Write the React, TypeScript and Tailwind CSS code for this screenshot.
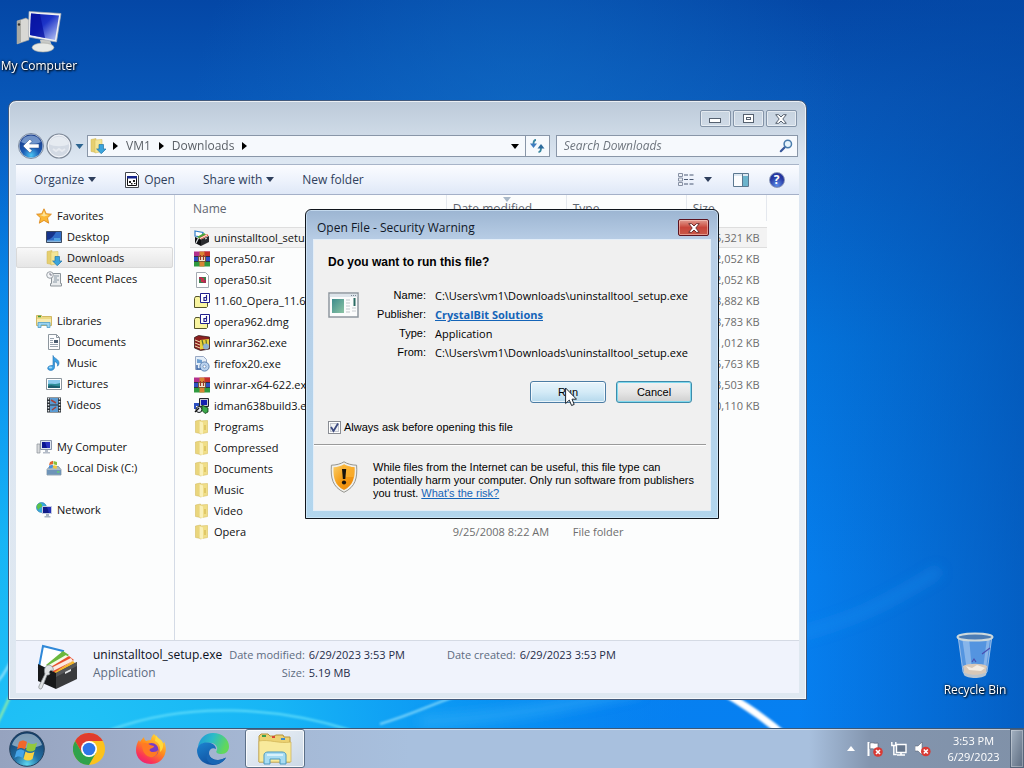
import clsx from 'clsx';
import { ReactNode } from 'react';

interface IconProps {
  className?: string;
}

interface NavItem {
  label: string;
  icon: ReactNode;
  active?: boolean;
}

interface FileItem {
  name: string;
  icon: ReactNode;
  date?: string;
  type?: string;
  size?: string;
}

/* Wallpaper */
const Wallpaper = () => (
  <svg
    className="absolute inset-0 h-full w-full"
    viewBox="0 0 1024 768"
    preserveAspectRatio="none"
    aria-hidden="true"
  >
    <defs>
      <linearGradient id="sky" x1="0" y1="0" x2="0" y2="1">
        <stop offset="0" stopColor="#0447a6" />
        <stop offset="0.13" stopColor="#0857b8" />
        <stop offset="0.45" stopColor="#0474dc" />
        <stop offset="0.75" stopColor="#067fee" />
        <stop offset="1" stopColor="#0680f2" />
      </linearGradient>
      <radialGradient id="glow" gradientUnits="userSpaceOnUse" cx="60" cy="760" r="640">
        <stop offset="0" stopColor="#22c4f6" />
        <stop offset="0.35" stopColor="#18b8f6" stopOpacity="0.95" />
        <stop offset="0.75" stopColor="#0a96f4" stopOpacity="0.6" />
        <stop offset="1" stopColor="#0680f2" stopOpacity="0" />
      </radialGradient>
      <radialGradient id="light" gradientUnits="userSpaceOnUse" cx="520" cy="130" r="330">
        <stop offset="0" stopColor="#1270c8" stopOpacity="0.6" />
        <stop offset="1" stopColor="#1270c8" stopOpacity="0" />
      </radialGradient>
      <linearGradient id="edge" x1="0" y1="0" x2="1" y2="0">
        <stop offset="0.78" stopColor="#0349a6" stopOpacity="0" />
        <stop offset="1" stopColor="#0349a6" stopOpacity="0.6" />
      </linearGradient>
      <filter id="soft">
        <feGaussianBlur stdDeviation="1" />
      </filter>
      <filter id="haze">
        <feGaussianBlur stdDeviation="6" />
      </filter>
    </defs>
    <rect width="1024" height="768" fill="url(#sky)" />
    <rect width="1024" height="768" fill="url(#light)" />
    <rect width="1024" height="768" fill="url(#glow)" />
    <rect width="1024" height="768" fill="url(#edge)" />
    <g fill="none" filter="url(#soft)">
      <path d="M-4 726C6 706 14 688 30 650" stroke="#9af0a0" strokeWidth="2" />
      <path d="M-4 684C6 672 10 664 20 640" stroke="#9fe6fb" strokeWidth="2" />
      <path d="M110 730C190 700 280 708 350 730" stroke="#5fdcfa" strokeWidth="2" />
      <path d="M380 724C420 712 440 700 470 692" stroke="#7fd6fb" strokeWidth="2" />
      <path d="M700 680C735 698 760 714 790 740" stroke="#fff" strokeWidth="7" />
    </g>
    <g fill="none" filter="url(#haze)">
      <path d="M420 722C520 716 560 706 640 690" stroke="#3cb4fa" strokeWidth="10" opacity="0.5" />
      <path d="M800 634C850 620 880 608 940 570" stroke="#2a94f4" strokeWidth="10" opacity="0.35" />
    </g>
  </svg>
);

/* Icons */
const ComputerIcon = ({ className }: IconProps) => (
  <svg className={className} viewBox="0 0 48 44" aria-hidden="true">
    <defs>
      <linearGradient id="screen" x1="0" y1="0" x2="1" y2="1">
        <stop offset="0" stopColor="#0a1aa8" />
        <stop offset="0.45" stopColor="#1c34c8" />
        <stop offset="1" stopColor="#c4d0f8" />
      </linearGradient>
    </defs>
    <path d="M2 11l9-3 3 2v20l-12 4z" fill="#d8d8d4" stroke="#9a9c98" strokeWidth="0.6" />
    <path d="M2 11l4-1v22l-4 2z" fill="#a9aaa4" />
    <circle cx="4" cy="14.500" r="1.200" fill="#333" />
    <path d="M25 30h10l2 6-10 2z" fill="#c8cac6" />
    <ellipse cx="28" cy="37.500" rx="11" ry="4.500" fill="#e8eae6" stroke="#a4a6a0" strokeWidth="0.6" />
    <path d="M14 1.500l32 2-4.500 28.500-28-5z" fill="#f0f2f4" stroke="#a8acb4" strokeWidth="0.7" />
    <path d="M16 3.500l28 2-4 24.500-25-5z" fill="url(#screen)" />
    <path d="M16 3.500l9 .8 5 23.700-15-3z" fill="#0512a0" opacity="0.75" />
  </svg>
);

const RecycleBinIcon = ({ className }: IconProps) => (
  <svg className={className} viewBox="0 0 38 46" aria-hidden="true">
    <path d="M2 4l5 36c1 5 22 5 24 0l5-36z" fill="#6fa4e6" fillOpacity="0.75" stroke="#b4cdee" strokeWidth="0.8" />
    <path d="M6 5l5 34h5L13 5z" fill="#e8f2fc" opacity="0.35" />
    <path d="M31 6l-4 31h3l4-30z" fill="#e8f2fc" opacity="0.35" />
    <path d="M7 34c5-3 19-3 24 0l-1 7c-4 4-18 4-22 0z" fill="#d8c8b8" />
    <path d="M10 34l6 2 5-3 8 3-4 3-12-1z" fill="#f4ece2" />
    <path d="M7 39c3 5 21 5 24 0l-1 4c-3 4-19 4-22 0z" fill="#b8c4d0" />
    <path d="M16 30l2-3 2 3M26 22l8-6" stroke="#4a50b0" strokeWidth="1.200" fill="none" />
    <ellipse cx="19" cy="5" rx="17.500" ry="3.600" fill="#4c7cb4" stroke="#ccd8dc" strokeWidth="2" />
  </svg>
);

const MonitorIcon = () => (
  <svg className="size-4 shrink-0" viewBox="0 0 16 16" aria-hidden="true">
    <path d="M1 5h3v9H1z" fill="#d8dadc" stroke="#8a9098" strokeWidth="0.7" />
    <path d="M4.500 1.500h11v9h-11z" fill="#dde4ee" stroke="#8a94a8" />
    <path d="M6 3h8v6H6z" fill="#2a32c0" />
    <path d="M6 3h3l2 6H6z" fill="#0a1490" />
    <path d="M9 11h3v2h2v1.500H7V13h2z" fill="#b4bcc8" />
  </svg>
);

const StarIcon = () => (
  <svg className="size-4 shrink-0" viewBox="0 0 16 16" aria-hidden="true">
    <path
      d="M8 .8l2.200 4.900 5.200.5-3.900 3.600 1.200 5.400L8 12.400l-4.700 2.800 1.200-5.400L.6 6.200l5.200-.5z"
      fill="#fbb836"
      stroke="#d98316"
      strokeWidth="0.8"
    />
    <path d="M8 3l1.300 3.600 3.500.5L8 8.500 4 7l2.600-.4z" fill="#fee39a" />
  </svg>
);

const DesktopIcon = () => (
  <svg className="size-4 shrink-0" viewBox="0 0 16 16" aria-hidden="true">
    <path d="M.5 2.500h15v11H.5z" fill="#2f6cc8" stroke="#3d4a60" />
    <path d="M1 3h9C8 7 5 10 1 11z" fill="#16348c" />
    <path d="M1 11.500h14V13H1z" fill="#8ab4dc" />
    <path d="M8 9h6v3H8z" fill="#4fa0e0" />
  </svg>
);

const FolderIcon = () => (
  <svg className="size-4 shrink-0" viewBox="0 0 16 16" aria-hidden="true">
    <path d="M1.500 2l5-1v13.500l-5-1z" fill="#ead67c" stroke="#cfb455" strokeWidth="0.5" />
    <path d="M6 2l7.500-.5v12L6 15z" fill="#f0de88" stroke="#d8c163" strokeWidth="0.6" />
    <path d="M5.500 2l3.500 1.500v11.500l-3.500-.5z" fill="#f9f0b8" />
    <path d="M10 6h2v5h-2z" fill="#d9bf58" opacity="0.7" />
  </svg>
);

const DownloadsIcon = () => (
  <svg className="size-4 shrink-0" viewBox="0 0 16 16" aria-hidden="true">
    <path d="M1 1.500l5-1v14l-5-1z" fill="#e6cf70" stroke="#cfb455" strokeWidth="0.5" />
    <path d="M5 2l7-.5v12L5 15z" fill="#f4e596" stroke="#d8c163" strokeWidth="0.6" />
    <path d="M9 6.500h4.500V11H16l-4.700 4.700L6.600 11H9z" fill="#3aa4dc" stroke="#2376a8" strokeWidth="0.7" />
  </svg>
);

const RecentIcon = () => (
  <svg className="size-4 shrink-0" viewBox="0 0 16 16" aria-hidden="true">
    <path d="M5.500 2.500h9v10h1v2.500h-11v-2.500h1z" fill="#e9ecee" stroke="#8c949a" />
    <path d="M8 5h5M8 7h3M8 9h5M7 11h4" stroke="#8a98a4" />
    <circle cx="4" cy="4" r="3.300" fill="#f4f6f8" stroke="#9aa0a6" />
    <path d="M4 2v2h2" stroke="#667" fill="none" strokeWidth="0.8" />
  </svg>
);

const LibrariesIcon = () => (
  <svg className="size-4 shrink-0" viewBox="0 0 16 16" aria-hidden="true">
    <path d="M.5 2.500h5l1 1h9v9H.5z" fill="#ecd983" stroke="#c8ac4c" strokeWidth="0.8" />
    <path d="M2 3.500h3" stroke="#3d9a3a" strokeWidth="1.500" />
    <path d="M1 6h14v6H1z" fill="#f6eab0" />
    <path d="M2 14.500V9.500h12v5h-3v-2.500H5v2.500z" fill="#9cd4f0" stroke="#4d9cc8" strokeWidth="0.8" />
  </svg>
);

const DocumentIcon = () => (
  <svg className="size-4 shrink-0" viewBox="0 0 16 16" aria-hidden="true">
    <path d="M2.500.5h8l3 3v12h-11z" fill="#fcfdfe" stroke="#8d969e" />
    <path d="M10.500.5v3h3" fill="none" stroke="#8d969e" />
    <path d="M4 4.500h4M4 6.500h3M4 8.500h3M4 10.500h8M4 12.500h8" stroke="#98a4b0" />
    <path d="M8 6h4v3H8z" fill="#4a5c70" />
  </svg>
);

const MusicIcon = () => (
  <svg className="size-4 shrink-0" viewBox="0 0 16 16" aria-hidden="true">
    <path
      d="M7 .5c1 3 6 3.500 6 7.500 0 1.500-.7 2.500-1.500 3.200.5-2.500-.7-4-3-4.700v5.700c0 1.800-1.600 3.200-3.700 3.200-1.900 0-3.100-.9-3.100-2.200 0-1.700 2-3 5.300-2.700z"
      fill="#3b9fe2"
      stroke="#1d6fb4"
      strokeWidth="0.6"
    />
    <ellipse cx="4.500" cy="12.500" rx="1.800" ry="1" fill="#9fd8f8" />
  </svg>
);

const PicturesIcon = () => (
  <svg className="size-4 shrink-0" viewBox="0 0 16 16" aria-hidden="true">
    <path d="M.5 2.500h15v11H.5z" fill="#fff" stroke="#8a949c" />
    <path d="M2 4h12v8H2z" fill="#8ccbee" />
    <path d="M2 8c3-1 6 1 12-1v5H2z" fill="#2f8f9a" />
    <path d="M2 10c4-2 8 1 12 0v2H2z" fill="#1c5f70" />
  </svg>
);

const VideosIcon = () => (
  <svg className="size-4 shrink-0" viewBox="0 0 16 16" aria-hidden="true">
    <path d="M1 .5h14v15H1z" fill="#2b3036" />
    <path d="M4 1h8v6.500H4zM4 8.500h8V15H4z" fill="#5a9cd4" />
    <path d="M5 3l5 3M10 10l-4 3" stroke="#a2453f" strokeWidth="1.500" />
    <path d="M2.500 1v14M13.500 1v14" stroke="#dfe4e8" strokeWidth="1.500" strokeDasharray="1.500 1.500" />
  </svg>
);

const DiskIcon = () => (
  <svg className="size-4 shrink-0" viewBox="0 0 16 16" aria-hidden="true">
    <path d="M1 9.500l2.500-3h9l2.500 3v5.500H1z" fill="#a9bac8" stroke="#6f8496" strokeWidth="0.7" />
    <path d="M1 10h14v4.500H1z" fill="#6e94b8" />
    <path d="M11 12h2.500" stroke="#5fe060" strokeWidth="1.200" />
    <path d="M4 2l3-1.300v3.500L3 5z" fill="#e2632c" />
    <path d="M7.500 1L11 2v3.200L7.500 4.300z" fill="#8ac03c" />
    <path d="M3 5.600L7 4.800 6.500 8 3 8.500z" fill="#4a90d8" />
    <path d="M7.500 5l3.500.9-.5 3L7 8z" fill="#f4c83a" />
  </svg>
);

const NetworkIcon = () => (
  <svg className="size-4 shrink-0" viewBox="0 0 16 16" aria-hidden="true">
    <circle cx="5.500" cy="5.500" r="5" fill="#37a9dc" stroke="#2478a8" strokeWidth="0.6" />
    <path d="M2 2c3-2 4 0 4 2S3 5 3 8C1 7 0 4 2 2z" fill="#5cc248" />
    <path d="M6.500 4.500h9v7h-9z" fill="#2430b8" stroke="#c3cbe0" />
    <path d="M7 5h4l2 6H7z" fill="#101c88" />
    <path d="M10 12h3v2h1.500v1.500h-6V14H10z" fill="#a8b4c4" />
  </svg>
);

const ToolboxIcon = ({ className }: IconProps) => (
  <svg className={className} viewBox="0 0 44 46" aria-hidden="true">
    <path d="M7 2l20 5-6 20-18-4z" fill="#fff" stroke="#2f88d8" strokeWidth="2" />
    <path d="M10 21l17-14 6 4-18 14z" fill="#6cb83c" />
    <path d="M11 22l19-11 3 3-19 12z" fill="#f4fbe8" />
    <path d="M13 24l20-12 5 4-20 13z" fill="#e8502f" />
    <path d="M15 24l20-10 2 3-20 10z" fill="#fdeae2" />
    <path d="M17 29l20-12 3 3-20 13z" fill="#f4b62c" />
    <path d="M2 20l18 9v16L2 37z" fill="#17181a" />
    <path d="M20 29l21-11v17L20 45z" fill="#3a3b3d" />
    <path d="M20 29l21-11v4L20 33z" fill="#57585a" />
    <path d="M29 28l6-3v2l-6 3z" fill="#e4e6e8" />
    <path
      d="M12 21c4 0 6 3 5 6l-2-1-2 2 1 2c-1 1-2 1-3 1L6 44c-1 2-4 1-3-2l6-12c-1-3-1-7 3-9z"
      fill="#dfe2e4"
      stroke="#8b9094"
      strokeWidth="0.8"
    />
  </svg>
);

const SetupIcon = () => (
  <svg className="size-4 shrink-0" viewBox="0 0 16 16" aria-hidden="true">
    <path d="M1 1l8 1.500L8 7 1 6z" fill="#fff" stroke="#2f7cc8" strokeWidth="1.200" />
    <path d="M3 7l7-4 2 1.500L6 9z" fill="#4aa83c" />
    <path d="M5 8l8-4 1.500 1.500L7 9.500z" fill="#e8502f" />
    <path d="M6 8.500l7-3.500" stroke="#fff" />
    <path d="M1 7l6 2.500V16l-6-3z" fill="#0e0f12" />
    <path d="M7 9.500L15 6v6l-8 4z" fill="#2a2b2e" />
    <path d="M11 9l2-1" stroke="#e4e6e8" />
    <path d="M4.500 8L2 13" stroke="#d8dcde" strokeWidth="1.200" />
  </svg>
);

const RarIcon = () => (
  <svg className="size-4 shrink-0" viewBox="0 0 16 16" aria-hidden="true">
    <path d="M0 .5h16v5H0z" fill="#b4308c" />
    <path d="M10 .5h6v5h-6z" fill="#c42f2a" />
    <path d="M0 5.500h16v5H0z" fill="#2f50c4" />
    <path d="M0 10.500h16v5H0z" fill="#2f9a3f" />
    <path d="M0 5.500h16M0 10.500h16" stroke="#17202c" strokeWidth="0.8" />
    <path d="M5.500.5h5v15h-5z" fill="#d88434" />
    <path d="M4.500 5.500h7v5h-7z" fill="#f2e8d0" stroke="#6c4420" strokeWidth="0.8" />
    <path d="M6.500 4v5M9.500 4v5" stroke="#a03424" strokeWidth="1.200" />
  </svg>
);

const SitIcon = () => (
  <svg className="size-4 shrink-0" viewBox="0 0 16 16" aria-hidden="true">
    <path d="M2.500.5h9l3 3v12h-12z" fill="#fff" stroke="#a4abb2" />
    <path d="M5 5h7v6H5z" fill="#3e7d4c" />
    <path d="M5 5h3v2H5zM9 8h3v3H9z" fill="#a52f52" />
    <path d="M7 6h3v4H7z" fill="#c8304a" />
  </svg>
);

const DmgIcon = () => (
  <svg className="size-4 shrink-0" viewBox="0 0 16 16" aria-hidden="true">
    <path d="M.5 5.500l1-2h4l1 1.500h7v8.500l-1 1H.5z" fill="#f8f4a0" stroke="#55552a" />
    <path d="M6.500.5h9v9h-9z" fill="#fff" stroke="#20208c" />
    <path d="M12.500 2v5.500M12.500 4.500h-2.500v3h2.500" stroke="#20208c" strokeWidth="1.200" fill="none" />
  </svg>
);

const WinrarIcon = () => (
  <svg className="size-4 shrink-0" viewBox="0 0 16 16" aria-hidden="true">
    <path d="M.5 2.500l4-2 11 1.500v12l-9 1.500-6-2.500z" fill="#8c2020" stroke="#241010" strokeWidth="0.7" />
    <path d="M1 5l5 2M1 8l5 2M1 11l5 2" stroke="#f0e0b0" />
    <path d="M6 5l9-1v9l-9 1.500z" fill="#e8cf3c" />
    <path d="M8 5l2 8M12 5l1 8" stroke="#5a6e2c" strokeWidth="1.200" />
    <circle cx="12" cy="11.500" r="3" fill="#8fb0d0" />
  </svg>
);

const InstallerIcon = () => (
  <svg className="size-4 shrink-0" viewBox="0 0 16 16" aria-hidden="true">
    <path d="M1.500.5h8l3 3v10h-11z" fill="#e4eef8" stroke="#98a8c4" />
    <path d="M3 3l5 1v3H3z" fill="#6f9fd0" />
    <circle cx="10.500" cy="10.500" r="4.600" fill="#b9d2ee" stroke="#5c80b0" />
    <circle cx="10.500" cy="10.500" r="1.500" fill="#fff" stroke="#5c80b0" strokeWidth="0.7" />
    <path d="M3 9v4h4" stroke="#3e68a8" strokeWidth="1.500" fill="none" />
  </svg>
);

const IdmanIcon = () => (
  <svg className="size-4 shrink-0" viewBox="0 0 16 16" aria-hidden="true">
    <path d="M5.500.5h9v8h-9z" fill="#c8ccd4" stroke="#23262c" />
    <path d="M7 2h6v5H7z" fill="#1420b0" />
    <path d="M0 5h5v3H2v3H0z" fill="#2c50c0" />
    <circle cx="5" cy="11.500" r="3" fill="#e8ecf0" stroke="#14181c" />
    <path d="M8 7l6 3v4l-3 1.500-3-3z" fill="#3ba84a" stroke="#123c1a" strokeWidth="0.8" />
    <path d="M1 14l4-4" stroke="#111" strokeWidth="1.500" />
  </svg>
);

const ShieldIcon = () => (
  <svg className="h-8 w-7 shrink-0" viewBox="0 0 28 32" aria-hidden="true">
    <defs>
      <linearGradient id="shield" x1="0" y1="0" x2="1" y2="1">
        <stop offset="0" stopColor="#fbd06a" />
        <stop offset="0.5" stopColor="#f59c14" />
        <stop offset="1" stopColor="#e8860c" />
      </linearGradient>
    </defs>
    <path
      d="M14 .8c3 2 8 3.400 12.600 3.400C27.500 17 25.500 26 14 31.300 2.500 26 .5 17 1.400 4.200 6 4.200 11 2.800 14 .8z"
      fill="#f0f0ec"
      stroke="#8a8a84"
      strokeWidth="0.9"
    />
    <path
      d="M14 3.200c3 1.800 6.500 2.800 10.500 3C25 17 23 24.500 14 29 5 24.500 3 17 3.500 6.200c4-.2 7.500-1.200 10.500-3z"
      fill="url(#shield)"
    />
    <path d="M14 3.200c3 1.800 6.500 2.800 10.500 3l-.1 9.800H14z" fill="#fdb93c" opacity="0.6" />
    <path d="M12 8h4.200l-.9 10h-2.400z" fill="#17130c" />
    <circle cx="14" cy="21.500" r="2.100" fill="#17130c" />
  </svg>
);

const ProgramIcon = () => (
  <svg className="h-[26px] w-8 shrink-0" viewBox="0 0 32 26" aria-hidden="true">
    <defs>
      <linearGradient id="program" x1="0" y1="0" x2="1" y2="1">
        <stop offset="0" stopColor="#3c8c8c" />
        <stop offset="1" stopColor="#8cc4a4" />
      </linearGradient>
    </defs>
    <path d="M1 1h29v24H1z" fill="#fbfcfc" stroke="#8e979e" strokeWidth="1.500" />
    <path d="M1.800 2h27.500v3H1.800z" fill="#dde4ea" />
    <path d="M23 3.500h5" stroke="#7a8894" strokeDasharray="1 1" />
    <path d="M4 7h12v14H4z" fill="url(#program)" />
    <path d="M18 8h4M18 11h4M18 14h4M18 17h4M18 20h4" stroke="#c0c6ca" />
    <path d="M26.500 6v8" stroke="#2c6c64" strokeWidth="2" />
    <path d="M24 16h4M24 19h4" stroke="#c8ccd0" />
  </svg>
);

const BackButton = () => (
  <svg className="size-7" viewBox="0 0 28 28" aria-hidden="true">
    <defs>
      <radialGradient id="back" cx="0.5" cy="0.9" r="0.8">
        <stop offset="0" stopColor="#4cc4f4" />
        <stop offset="0.45" stopColor="#1c5cb4" />
        <stop offset="1" stopColor="#1c3f8c" />
      </radialGradient>
    </defs>
    <circle cx="14" cy="14" r="12.500" fill="#d4dfec" stroke="#7c8ba0" />
    <circle cx="14" cy="14" r="11.500" fill="url(#back)" />
    <path d="M4 10a11 11 0 0 1 20 0c-6 3-14 3-20 0z" fill="#a8c8ec" opacity="0.6" />
    <path d="M6 14l7-7 2 2.500-2.500 2.500H22v4h-9.500l2.500 2.500L13 21z" fill="#fff" stroke="#2c4c84" strokeWidth="0.5" />
  </svg>
);

const ForwardButton = () => (
  <svg className="size-7" viewBox="0 0 28 28" aria-hidden="true">
    <circle cx="14" cy="14" r="12" fill="#d3dae4" stroke="#7c8796" strokeWidth="1.200" />
    <circle cx="14" cy="14" r="10.800" fill="none" stroke="#f4f6fa" />
    <path d="M4 12a10.500 10.500 0 0 1 20 0c-5 3-15 3-20 0z" fill="#e6ebf1" />
    <path d="M8 17l3 2 3-2 3 2 3-2" fill="none" stroke="#e6eaf0" strokeWidth="2" />
  </svg>
);

const Triangle = ({ className }: IconProps) => (
  <svg className={clsx('h-[5px]', className ?? 'w-2')} viewBox="0 0 8 5" aria-hidden="true">
    <path d="M0 0h8L4 5z" fill="currentColor" />
  </svg>
);

const RightTriangle = () => (
  <svg className="h-2 w-[5px]" viewBox="0 0 5 8" aria-hidden="true">
    <path d="M0 0v8l5-4z" fill="#000" />
  </svg>
);

const RefreshIcon = () => (
  <svg className="size-4" viewBox="0 0 16 16" aria-hidden="true">
    <path d="M7 2C4.800 2 4.500 4 4.500 6" stroke="#3886a0" strokeWidth="1.800" fill="none" />
    <path d="M1 5.500h7L4.500 10z" fill="#3f7cc0" />
    <path d="M9.500 14c2.200 0 2.500-2 2.500-4" stroke="#3886a0" strokeWidth="1.800" fill="none" />
    <path d="M8.500 10.500h7L12 6z" fill="#2c6a9c" />
  </svg>
);

const SearchIcon = () => (
  <svg className="size-3.5" viewBox="0 0 14 14" aria-hidden="true">
    <path d="M6 8L1.800 12.200" stroke="#38579a" strokeWidth="2.200" strokeLinecap="round" />
    <circle cx="8.800" cy="5" r="3.700" fill="#e6f4fc" stroke="#4a7cac" strokeWidth="1.500" />
  </svg>
);

const OpenIcon = () => (
  <svg className="size-4" viewBox="0 0 16 16" aria-hidden="true">
    <path d="M1.500.5h10l3 3v12h-13z" fill="#fdfdfd" stroke="#44484e" />
    <path d="M3.500 4.500h9v9h-9z" fill="#fff" stroke="#111" />
    <path d="M3 4h10v2.500H3z" fill="#14248c" />
    <path d="M5 9h2v2H5zM9 8h2v2H9zM7 11h1.500v1.500H7zM10 11h1.500v1H10z" fill="#222" />
  </svg>
);

const ViewIcon = () => (
  <svg className="h-3.5 w-4" viewBox="0 0 16 14" aria-hidden="true">
    <path d="M.5.500h4v3h-4zM.5 5h4v3h-4zM.5 9.500h4v3h-4z" fill="#eef2f8" stroke="#8791a4" />
    <path d="M6 2h4M11.500 2h4M6 6.500h4M11.500 6.500h4M6 11h4M11.500 11h4" stroke="#4a5872" />
  </svg>
);

const PreviewIcon = () => (
  <svg className="h-3.5 w-4" viewBox="0 0 16 14" aria-hidden="true">
    <path d="M.5.500h15v13H.5z" fill="#fcfdfe" stroke="#5c7890" />
    <path d="M1 1h14v2H1z" fill="#dfe9f2" />
    <path d="M10 3h5v10h-5z" fill="#6cb4cc" />
    <path d="M9.500 1v12.500" stroke="#5c7890" />
  </svg>
);

const HelpIcon = () => (
  <span className="flex size-4 items-center justify-center rounded-full border border-[#8794b8] bg-[radial-gradient(circle_at_50%_85%,#5c8ce8,#2536a0_60%)] text-xs font-bold text-white">
    ?
  </span>
);

const CloseGlyph = ({ className }: IconProps) => (
  <svg className={clsx('h-2.5 w-3', className)} viewBox="0 0 12 10" aria-hidden="true">
    <path
      d="M.7.700h3L6 3 8.300.7h3L7.800 5l3.500 4.300h-3L6 7 3.700 9.300h-3L4.200 5z"
      fill="#fff"
      stroke="currentColor"
      strokeWidth="1"
    />
  </svg>
);

const CursorIcon = () => (
  <svg className="pointer-events-none absolute top-[177px] left-[259px] h-5 w-3" viewBox="0 0 12 20" aria-hidden="true">
    <path d="M.6 1v15.500l3.700-3.400L6.600 18.500l2.600-1.100L7 12.200h4.500z" fill="#fff" stroke="#1c2630" strokeWidth="1" />
  </svg>
);

/* Taskbar icons */
const StartOrb = () => (
  <svg className="size-9" viewBox="0 0 36 36" aria-hidden="true">
    <defs>
      <radialGradient id="orb" cx="0.5" cy="0.95" r="0.9">
        <stop offset="0" stopColor="#5cd8f0" />
        <stop offset="0.4" stopColor="#2470a4" />
        <stop offset="1" stopColor="#123c68" />
      </radialGradient>
    </defs>
    <circle cx="18" cy="18" r="17.300" fill="url(#orb)" stroke="#24405c" />
    <path d="M3 14a15.500 15.500 0 0 1 30 0c-8 4-22 4-30 0z" fill="#c4d8e4" opacity="0.6" />
    <path d="M10 11c3-2 5-2 8 0l-2 7.500c-3-2-5-2-8 0z" fill="#f2682a" />
    <path d="M19 11.500c3 2 6 2 9 0l-2 7.500c-3 2-6 2-9 0z" fill="#92c83e" />
    <path d="M7.500 20c3-2 5-2 8 0L13.500 27c-3-2-5-2-8 0z" fill="#45a4e8" />
    <path d="M16.500 20.500c3 2 6 2 9 0l-2 7.500c-3 2-6 2-9 0z" fill="#fbd040" />
  </svg>
);

const ChromeIcon = () => (
  <svg className="size-8" viewBox="0 0 32 32" aria-hidden="true">
    <circle cx="16" cy="16" r="16" fill="#fbc21c" />
    <path d="M16 8h13.860A16 16 0 0 0 2.140 8L9 20z" fill="#e03c2e" />
    <path d="M2.140 8A16 16 0 0 0 16 32l6.900-12L9.100 20z" fill="#2fa24c" />
    <circle cx="16" cy="16" r="8" fill="#fff" />
    <circle cx="16" cy="16" r="6.300" fill="#2f76e8" />
  </svg>
);

const FirefoxIcon = () => (
  <svg className="size-8" viewBox="0 0 32 32" aria-hidden="true">
    <defs>
      <linearGradient id="fox" x1="0.8" y1="0" x2="0.2" y2="1">
        <stop offset="0" stopColor="#ffe03c" />
        <stop offset="0.45" stopColor="#ff8a1c" />
        <stop offset="0.8" stopColor="#fb3458" />
        <stop offset="1" stopColor="#e8207c" />
      </linearGradient>
    </defs>
    <path
      d="M19 1c2 3 7 5 9 9 1 1 1-1 1-2 2 5 2.500 9 1 13-2 6-7 10-14 10C7 31 1 25 1 17c0-4 1-7 3-10l1 2c1-2 3-4 4-5 0 2 1 3 2 4 2-1 4-1 5-1 0-2 1-4 3-6z"
      fill="url(#fox)"
    />
    <circle cx="16.500" cy="17" r="7" fill="#7a3cc4" />
    <path d="M7 11c3-2 6-1 8 1l4 1c0 2-3 2-4 3s0 3 3 3 4-1 5-2c0 5-4 8-8 7-5-1-8-6-8-13z" fill="#ff7a24" />
    <path d="M20 8c4 2 6 6 5 11 4-3 4-9 1-12-2-1-4-3-5-5z" fill="#ffd93c" />
  </svg>
);

const EdgeIcon = () => (
  <svg className="size-8" viewBox="0 0 32 32" aria-hidden="true">
    <defs>
      <linearGradient id="edgeTop" x1="0" y1="0" x2="1" y2="0.3">
        <stop offset="0" stopColor="#1c94d8" />
        <stop offset="0.5" stopColor="#2cbcc8" />
        <stop offset="1" stopColor="#62d85a" />
      </linearGradient>
      <linearGradient id="edgeSide" x1="0" y1="0" x2="0.6" y2="1">
        <stop offset="0" stopColor="#1c84d0" />
        <stop offset="1" stopColor="#0f4c9c" />
      </linearGradient>
    </defs>
    <path
      d="M1 14C2 6 8 0 16 0c9 0 16 6 16 13.500 0 4.500-3 7.500-7.500 7.500-4 0-6-1.500-5-3 1.500-2 1-7-5-8C9 9 4 10 1 14z"
      fill="url(#edgeTop)"
    />
    <path
      d="M0 17C1 11 6 9 11 9.500c5 .5 8 3.500 8 6.500-3-2-7 0-7 4 0 5 6 8 12 6.500 2-.5 4-1.500 5-2-2 4-7 7.500-13 7.500C7 32 0 26 0 17z"
      fill="url(#edgeSide)"
    />
    <path d="M12 19c-1 6 6 9.500 12 7.500 2-.5 4-1.500 5-2-2 4-7 7-12 7-7-1-10-8-5-12.500z" fill="#1866b4" />
  </svg>
);

const ExplorerIcon = () => (
  <svg className="h-8 w-[34px]" viewBox="0 0 34 32" aria-hidden="true">
    <path d="M1 3l2-2h7l2 2h4l2-1h7l1 2h6v25H1z" fill="#ecd272" stroke="#b4933c" />
    <path d="M4 2h4v2H4z" fill="#3da04c" />
    <path d="M14 3h3v2h-3z" fill="#d84a34" />
    <path d="M23 5h4v2h-4z" fill="#3c88cc" />
    <path d="M1 8c10-2 20 3 32 1v20H1z" fill="#f8ea9c" stroke="#cdb050" strokeWidth="0.7" />
    <path d="M6 31V22c0-2 2-3 4-3h14c2 0 4 1 4 3v9h-6v-5H12v5z" fill="#a8dcf2" stroke="#4a98c0" />
    <path d="M9 22h16" stroke="#e8f8fe" strokeWidth="1.500" />
  </svg>
);

const FlagIcon = () => (
  <svg className="size-4" viewBox="0 0 16 16" aria-hidden="true">
    <path d="M1.500 1v14" stroke="#fff" strokeWidth="2" />
    <path d="M3 2c3-1 4 1 8 0v6c-4 1-5-1-8 0z" fill="#fff" stroke="#4c5464" strokeWidth="0.6" />
    <circle cx="11" cy="11" r="4.800" fill="#d93a34" />
    <path d="M9 9l4 4M13 9l-4 4" stroke="#fff" strokeWidth="1.600" />
  </svg>
);

const LanIcon = () => (
  <svg className="size-4" viewBox="0 0 16 16" aria-hidden="true">
    <path d="M5.500 3.500h9.500v8H5.500z" fill="#66768c" stroke="#fff" strokeWidth="1.400" />
    <path d="M6 14h8M10 12v2" stroke="#fff" strokeWidth="1.600" />
    <path d="M.8 1v3.500h4V1M2.800 4.500v9h3" stroke="#fff" strokeWidth="1.400" fill="none" />
  </svg>
);

const SpeakerIcon = () => (
  <svg className="size-4" viewBox="0 0 16 16" aria-hidden="true">
    <path d="M0 5h3l4-4v13l-4-4H0z" fill="#fff" stroke="#4c5464" strokeWidth="0.5" />
    <circle cx="10.800" cy="10.500" r="4.800" fill="#d93a34" />
    <path d="M8.800 8.500l4 4M12.800 8.500l-4 4" stroke="#fff" strokeWidth="1.600" />
  </svg>
);

/* Data */
const NAV_GROUPS: { root: NavItem; items: NavItem[] }[] = [
  {
    root: { label: 'Favorites', icon: <StarIcon /> },
    items: [
      { label: 'Desktop', icon: <DesktopIcon /> },
      { label: 'Downloads', icon: <DownloadsIcon />, active: true },
      { label: 'Recent Places', icon: <RecentIcon /> },
    ],
  },
  {
    root: { label: 'Libraries', icon: <LibrariesIcon /> },
    items: [
      { label: 'Documents', icon: <DocumentIcon /> },
      { label: 'Music', icon: <MusicIcon /> },
      { label: 'Pictures', icon: <PicturesIcon /> },
      { label: 'Videos', icon: <VideosIcon /> },
    ],
  },
  {
    root: { label: 'My Computer', icon: <MonitorIcon /> },
    items: [{ label: 'Local Disk (C:)', icon: <DiskIcon /> }],
  },
  { root: { label: 'Network', icon: <NetworkIcon /> }, items: [] },
];

const FILES: FileItem[] = [
  { name: 'uninstalltool_setup.exe', icon: <SetupIcon />, size: '5,321 KB' },
  { name: 'opera50.rar', icon: <RarIcon />, size: '2,052 KB' },
  { name: 'opera50.sit', icon: <SitIcon />, size: '2,052 KB' },
  { name: '11.60_Opera_11.60.dmg', icon: <DmgIcon />, size: '8,882 KB' },
  { name: 'opera962.dmg', icon: <DmgIcon />, size: '8,783 KB' },
  { name: 'winrar362.exe', icon: <WinrarIcon />, size: '1,012 KB' },
  { name: 'firefox20.exe', icon: <InstallerIcon />, size: '5,763 KB' },
  { name: 'winrar-x64-622.exe', icon: <RarIcon />, size: '3,503 KB' },
  { name: 'idman638build3.exe', icon: <IdmanIcon />, size: '10,110 KB' },
  { name: 'Programs', icon: <FolderIcon /> },
  { name: 'Compressed', icon: <FolderIcon /> },
  { name: 'Documents', icon: <FolderIcon /> },
  { name: 'Music', icon: <FolderIcon /> },
  { name: 'Video', icon: <FolderIcon /> },
  { name: 'Opera', icon: <FolderIcon />, date: '9/25/2008 8:22 AM', type: 'File folder' },
];

const FILE_PATH = 'C:\\Users\\vm1\\Downloads\\uninstalltool_setup.exe';

/* Explorer window */
const frameButton =
  'flex h-[17px] w-[31px] items-center justify-center rounded-xs border border-[#8494a8] bg-white/10 shadow-[inset_0_0_0_1px_rgba(255,255,255,0.5)]';

const TitleBar = () => (
  <header className="flex justify-end gap-0.5 pt-[9px] pr-0.5">
    <button className={frameButton} aria-label="Minimize">
      <span className="mt-1 h-[5px] w-3 border border-[#56616f] bg-white" />
    </button>
    <button className={frameButton} aria-label="Maximize">
      <span className="flex h-[9px] w-[11px] items-center justify-center border border-[#56616f] bg-white">
        <span className="h-[3px] w-[5px] border border-[#56616f]" />
      </span>
    </button>
    <button className={frameButton} aria-label="Close">
      <CloseGlyph className="text-[#56616f]" />
    </button>
  </header>
);

const AddressBar = () => (
  <div className="flex items-center pt-[5px] pr-px pb-1">
    <button aria-label="Back" className="ml-px">
      <BackButton />
    </button>
    <button aria-label="Forward">
      <ForwardButton />
    </button>
    <button aria-label="Recent pages" className="ml-0.5">
      <Triangle className="w-[9px] text-[#2c6490]" />
    </button>
    <nav className="ml-[3px] flex h-[22px] flex-1 items-center border border-[#8996a8] bg-[#f6f9fd] text-[#5a5f66]">
      <span className="ml-0.5">
        <DownloadsIcon />
      </span>
      <span className="flex flex-1 items-center gap-2 pl-[7px]">
        <RightTriangle />
        <a href="#vm1">VM1</a>
        <RightTriangle />
        <a href="#downloads">Downloads</a>
        <RightTriangle />
      </span>
      <button aria-label="Previous locations" className="px-1.5">
        <Triangle className="w-2 text-black" />
      </button>
      <button aria-label="Refresh" className="flex h-full w-6 items-center justify-center border-l border-[#8996a8]">
        <RefreshIcon />
      </button>
    </nav>
    <label className="ml-1.5 flex h-[22px] w-[242px] items-center border border-[#8996a8] bg-[#f6f9fd] pr-1">
      <input
        type="text"
        placeholder="Search Downloads"
        aria-label="Search Downloads"
        className="min-w-0 flex-1 bg-transparent px-[7px] outline-none placeholder:text-[#6e757e] placeholder:italic"
      />
      <SearchIcon />
    </label>
  </div>
);

const Toolbar = () => (
  <div className="flex h-[31px] shrink-0 items-center border-y border-t-[#a8b4c8] border-b-[#a4b0c8] bg-linear-to-b from-[#fbfcff] via-[#eef3fc] to-[#dfe8f7] pr-3.5 pl-[18px] text-[#2f3f5c]">
    <button className="flex items-center gap-1">
      Organize <Triangle />
    </button>
    <button className="ml-7 flex items-center gap-1">
      <OpenIcon /> Open
    </button>
    <button className="ml-7 flex items-center gap-1">
      Share with <Triangle />
    </button>
    <button className="ml-7">New folder</button>
    <div className="ml-auto flex items-center">
      <button aria-label="Change view">
        <ViewIcon />
      </button>
      <button aria-label="More view options" className="ml-2.5">
        <Triangle />
      </button>
      <button aria-label="Preview pane" className="ml-[21px]">
        <PreviewIcon />
      </button>
      <button aria-label="Help" className="ml-5">
        <HelpIcon />
      </button>
    </div>
  </div>
);

const NavRow = ({ item, nested }: { item: NavItem; nested?: boolean }) => (
  <li>
    <a
      href="#"
      className={clsx(
        'mr-px flex h-[21px] items-center gap-[5px] border whitespace-nowrap',
        nested ? 'pl-[29px]' : 'pl-[19px]',
        item.active ? 'rounded-xs border-[#d9d9d9] bg-linear-to-b from-[#f8f8f8] to-[#e6e6e6]' : 'border-transparent',
      )}
    >
      {item.icon}
      {item.label}
    </a>
  </li>
);

const NavPane = () => (
  <aside className="w-[159px] shrink-0 border-r border-[#d4dbe6] pt-2.5 text-[#111]">
    {NAV_GROUPS.map(({ root, items }) => (
      <ul className="mb-[21px]" key={root.label}>
        <NavRow item={root} />
        {items.map((item) => (
          <NavRow item={item} nested key={item.label} />
        ))}
      </ul>
    ))}
  </aside>
);

const FileTable = () => (
  <div className="min-w-0 flex-1 overflow-hidden pr-8 pl-[15px]">
    <table className="w-full table-fixed border-separate border-spacing-0 whitespace-nowrap text-[#6d6d6d]">
      <thead>
        <tr className="h-8 align-top text-left text-xs leading-[27px] text-[#5f6670]">
          <th className="pl-[3px] font-normal">
            <div className="h-[26px] border-r border-[#e4e8ee]">Name</div>
          </th>
          <th className="w-[120px] font-normal">
            <div className="relative h-[26px] border-r border-[#e4e8ee] pl-1.5">
              Date modified
              <Triangle className="absolute top-0.5 left-14 w-2 text-[#a9b8c8]" />
            </div>
          </th>
          <th className="w-[120px] font-normal">
            <div className="h-[26px] border-r border-[#e4e8ee] pl-1.5">Type</div>
          </th>
          <th className="w-20 font-normal">
            <div className="h-[26px] border-r border-[#e4e8ee] pl-1.5">Size</div>
          </th>
        </tr>
      </thead>
      <tbody>
        {FILES.map((file, index) => (
          <tr
            className={clsx(
              'h-[21px]',
              index === 0 && 'bg-[#f3f3f3] [&>td]:border-y [&>td]:border-[#dedede]',
            )}
            key={file.name}
          >
            <td className="overflow-hidden p-0">
              <span className="flex items-center gap-1 pl-1 text-[#111]">
                {file.icon}
                {file.name}
              </span>
            </td>
            <td className="p-0 pl-1.5">{file.date}</td>
            <td className="p-0 pl-1.5">{file.type}</td>
            <td className="p-0 pr-[7px] text-right">{file.size}</td>
          </tr>
        ))}
      </tbody>
    </table>
  </div>
);

const DetailsPane = () => (
  <footer className="flex h-[53px] shrink-0 items-start border-t border-[#d5dae4] bg-[#f0f3fc] pl-5 text-[11px] leading-[18px] text-[#5d6b80]">
    <ToolboxIcon className="mt-[3px] h-[46px] w-11" />
    <div className="pt-[5px] pl-[13px] text-xs leading-[18px]">
      <p className="text-[#0c1020]">uninstalltool_setup.exe</p>
      <p>Application</p>
    </div>
    <dl className="grid grid-cols-[auto_auto] gap-x-1 pt-[5px] pl-[7px]">
      <dt className="text-right">Date modified:</dt>
      <dd className="text-[#1f2c48]">6/29/2023 3:53 PM</dd>
      <dt className="text-right">Size:</dt>
      <dd className="text-[#1f2c48]">5.19 MB</dd>
    </dl>
    <dl className="flex gap-1 pt-[5px] pl-[42px]">
      <dt>Date created:</dt>
      <dd className="text-[#1f2c48]">6/29/2023 3:53 PM</dd>
    </dl>
  </footer>
);

const ExplorerWindow = () => (
  <section className="absolute top-[100px] bottom-7 left-2 flex w-[78%] flex-col rounded-t-lg border border-[#41597c] bg-linear-to-b from-[#bccad9] via-[#dde7f2] via-10% to-[#dfe8f1] px-[7px] pb-1.5 shadow-[inset_0_0_0_1px_rgba(255,255,255,0.7)]">
    <TitleBar />
    <AddressBar />
    <Toolbar />
    <div className="flex min-h-0 flex-1 bg-[#fcfdfd] text-[11px] leading-4">
      <NavPane />
      <FileTable />
    </div>
    <DetailsPane />
  </section>
);

/* Security warning */
const sansLabel = "text-right font-['Liberation_Sans',sans-serif]";

const SecurityDialog = () => (
  <section
    role="dialog"
    aria-labelledby="dialog-title"
    className="absolute top-[209px] left-[305px] w-[414px] rounded-t-md border border-[#10151c] bg-linear-to-b from-[#9cb5d2] via-[#b9cee6] via-10% to-[#b2d6ee] px-[7px] pb-[7px] shadow-[inset_0_0_0_1px_rgba(220,240,255,0.6)]"
  >
    <header className="flex h-[29px] items-center justify-between pt-1.5 pr-0.5 pl-1 text-[#101828]">
      <h2 id="dialog-title">Open File - Security Warning</h2>
      <button
        aria-label="Close"
        className="flex h-[17px] w-[31px] items-center justify-center rounded-xs border border-[#5c1420] bg-linear-to-b from-[#e09a90] via-[#c8453a] to-[#c85848] shadow-[inset_0_0_0_1px_rgba(255,220,210,0.5)]"
      >
        <CloseGlyph className="text-[#6c3030]" />
      </button>
    </header>
    <div className="border border-[#e4eef8] bg-[#f0f0f0] text-[11px] text-black">
      <div className="px-3.5 pt-3.5">
        <p className="font-['Liberation_Sans',sans-serif] text-xs leading-4 font-bold">Do you want to run this file?</p>
        <div className="mt-4 flex items-start">
          <span className="mt-1.5">
            <ProgramIcon />
          </span>
          <dl className="grid flex-1 grid-cols-[66px_auto] gap-x-[9px] leading-[19px]">
            <dt className={sansLabel}>Name:</dt>
            <dd>{FILE_PATH}</dd>
            <dt className={sansLabel}>Publisher:</dt>
            <dd>
              <a href="#publisher" className="font-bold text-[#1464b8] underline">
                CrystalBit Solutions
              </a>
            </dd>
            <dt className={sansLabel}>Type:</dt>
            <dd>Application</dd>
            <dt className={sansLabel}>From:</dt>
            <dd>{FILE_PATH}</dd>
          </dl>
        </div>
        <div className="mt-[19px] flex justify-end gap-2.5 pr-1 font-['Liberation_Sans',sans-serif]">
          <button className="h-[22px] w-[76px] rounded-[3px] border border-[#4c7ca4] bg-linear-to-b from-[#e8f4fb] via-[#d4ebf7] to-[#b4d8ec] shadow-[inset_0_0_0_1px_rgba(255,255,255,0.7)]">
            Run
          </button>
          <button className="h-[22px] w-[76px] rounded-[3px] border border-[#3d8cab] bg-linear-to-b from-[#f2f2f2] via-[#e6e6e6] to-[#cfcfcf] shadow-[inset_0_0_0_1px_#7fd8ee]">
            Cancel
          </button>
        </div>
        <label className="mt-4 flex items-center gap-[3px] font-['Liberation_Sans',sans-serif] leading-4">
          <span className="relative flex">
            <input
              type="checkbox"
              defaultChecked
              className="peer size-[13px] appearance-none border border-[#8a8d94] bg-[#f0f2f4] shadow-[inset_0_0_0_1px_#fff,inset_0_0_0_2px_#c4c8d0]"
            />
            <svg
              className="pointer-events-none absolute inset-0 hidden size-[13px] peer-checked:block"
              viewBox="0 0 13 13"
              aria-hidden="true"
            >
              <path d="M3 6l2.500 4L10 2.500" fill="none" stroke="#3c4a80" strokeWidth="1.800" />
            </svg>
          </span>
          Always ask before opening this file
        </label>
      </div>
      <div className="mt-[9px] mr-1 flex gap-[15px] border-t border-[#9a9a9a] pt-4 pb-2.5 pl-4 font-['Liberation_Sans',sans-serif] leading-[13px] shadow-[inset_0_1px_0_#fff]">
        <ShieldIcon />
        <p className="w-[326px]">
          While files from the Internet can be useful, this file type can potentially harm your computer. Only run
          software from publishers you trust.{' '}
          <a href="#risk" className="text-[#1464b8] underline">
            What's the risk?
          </a>
        </p>
      </div>
    </div>
    <CursorIcon />
  </section>
);

/* Taskbar */
const pinned = [
  { label: 'Google Chrome', icon: <ChromeIcon /> },
  { label: 'Firefox', icon: <FirefoxIcon /> },
  { label: 'Microsoft Edge', icon: <EdgeIcon /> },
];

const Taskbar = () => (
  <nav className="relative flex h-10 shrink-0 items-center border-t border-[#3c5878] bg-[linear-gradient(90deg,#96a3bf,#a3b4d0_20%,#a8c0de_40%,#a8c0de_79%,#8395ae_85%,#8091a8)] shadow-[inset_0_1px_0_rgba(255,255,255,0.5)]">
    <button aria-label="Start" className="mr-[13px] ml-[9px]">
      <StartOrb />
    </button>
    {pinned.map((app) => (
      <button aria-label={app.label} className="flex w-[62px] justify-center" key={app.label}>
        {app.icon}
      </button>
    ))}
    <button
      aria-label="Windows Explorer"
      className="ml-px flex h-full w-[60px] items-center justify-center rounded-[3px] border border-[#5c7088] bg-linear-to-br from-[#eef3f8] to-[#cbd8e6] shadow-[inset_0_0_0_1px_rgba(255,255,255,0.8)]"
    >
      <ExplorerIcon />
    </button>
    <div className="ml-auto flex h-full items-center">
      <button aria-label="Show hidden icons" className="mr-3">
        <Triangle className="w-2 rotate-180 text-white" />
      </button>
      <div className="flex gap-2">
        <FlagIcon />
        <LanIcon />
        <SpeakerIcon />
      </div>
      <div className="w-[79px] pl-1.5 text-center text-[11px] leading-4 text-white">
        <p>3:53 PM</p>
        <p>6/29/2023</p>
      </div>
      <button
        aria-label="Show desktop"
        className="h-full w-3.5 border border-[#55657a] bg-linear-to-br from-[#a4b2c2] to-[#5d6c80] shadow-[inset_0_0_0_1px_rgba(255,255,255,0.3)]"
      />
    </div>
  </nav>
);

const shortcutLabel = 'text-white [text-shadow:1px_1px_2px_#000,0_0_3px_#000] whitespace-nowrap';

export default function App() {
  return (
    <div className="relative flex h-screen flex-col overflow-hidden bg-[#0474dc] font-['Open_Sans',sans-serif] text-xs">
      <Wallpaper />
      <main className="relative min-h-0 flex-1">
        <a href="#my-computer" className="absolute top-2.5 left-0.5 flex w-[74px] flex-col items-center gap-1">
          <ComputerIcon className="h-11 w-12" />
          <span className={shortcutLabel}>My Computer</span>
        </a>
        <a href="#recycle-bin" className="absolute right-2.5 bottom-[30px] flex w-[78px] flex-col items-center gap-1">
          <RecycleBinIcon className="h-[46px] w-[38px]" />
          <span className={shortcutLabel}>Recycle Bin</span>
        </a>
        <ExplorerWindow />
        <SecurityDialog />
      </main>
      <Taskbar />
    </div>
  );
}
